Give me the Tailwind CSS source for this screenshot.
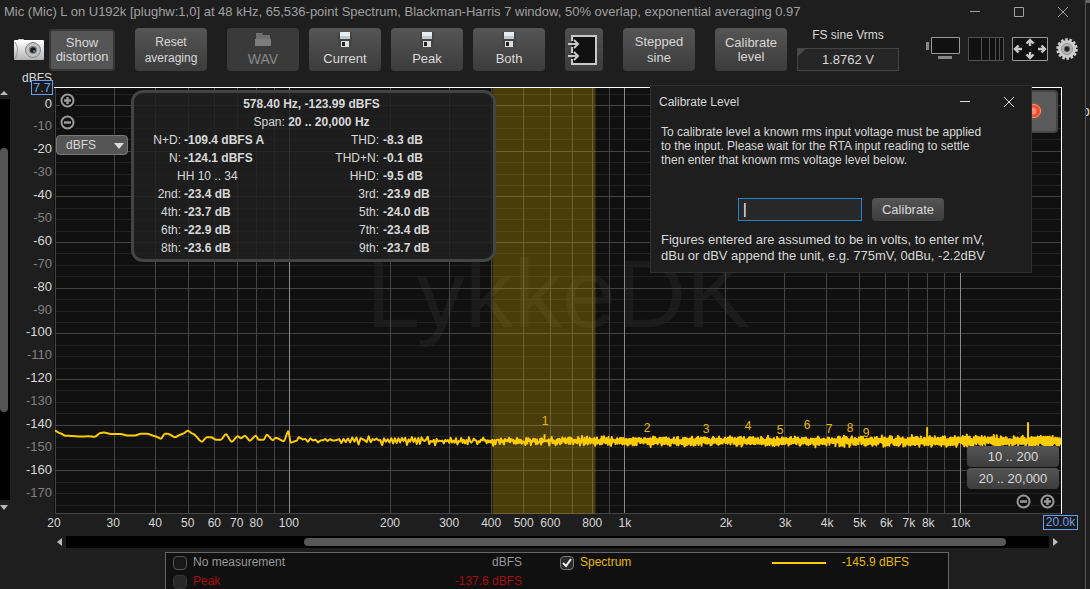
<!DOCTYPE html>
<html lang="en">
<head>
<meta charset="utf-8">
<title>RTA</title>
<script src="https://cdn.jsdelivr.net/npm/@tailwindcss/browser@4"></script>
</head>
<body class="flex h-screen overflow-hidden bg-[#1e1e1e] font-['Liberation_Sans',Arial,sans-serif] text-[13px] text-[#d8d8d8]">
<main class="relative flex min-w-0 flex-1 flex-col border-r border-[#555]">
  <header class="flex h-6 shrink-0 items-center justify-between pl-1">
    <h1 class="text-[13px] text-[#a0a0a0]">Mic (Mic) L on U192k [plughw:1,0] at 48 kHz, 65,536-point Spectrum, Blackman-Harris 7 window, 50% overlap, exponential averaging 0.97</h1>
    <div class="flex">
      <button aria-label="Minimise" class="flex h-6 w-11 items-center justify-center"><svg width="12" height="12" stroke="#a0a0a0" fill="none"><path d="M1 5.500h10"/></svg></button>
      <button aria-label="Maximise" class="flex h-6 w-11 items-center justify-center"><svg width="12" height="12" stroke="#a0a0a0" fill="none"><path d="M1.500 1.500h9v9h-9z"/></svg></button>
      <button aria-label="Close" class="flex h-6 w-11 items-center justify-center"><svg width="12" height="12" stroke="#a0a0a0" fill="none"><path d="M1 1l10 10M11 1L1 11"/></svg></button>
    </div>
  </header>

  <section class="flex h-[52px] shrink-0 items-start pt-1 pl-3.5 pr-[7px] leading-4" aria-label="Toolbar">
    <button aria-label="Capture image" class="mt-2.5 mr-[5px] h-6 w-[30px]">
      <svg width="30" height="24" viewBox="0 0 30 24"><defs><linearGradient id="cam" x2="0" y2="1"><stop stop-color="#fff"/><stop offset="1" stop-color="#b5b5b5"/></linearGradient></defs><rect x="4" y="1" width="6" height="4" rx="1" fill="#ccc"/><rect y="2" width="30" height="20" rx="1" fill="url(#cam)"/><path d="M1 4q5 7 0 17" stroke="#999" fill="none"/><circle cx="19" cy="12" r="7.500" fill="#bbb" stroke="#888"/><circle cx="19" cy="12" r="5" fill="#888" stroke="#ddd"/><circle cx="19" cy="12" r="2.800" fill="#181818"/><circle cx="20" cy="13" r="1" fill="#6b8db8"/><rect x="24" y="4" width="4" height="2" fill="#fff"/></svg>
    </button>
    <button class="mt-px h-[42px] w-[66px] rounded border-2 border-[#383838] bg-[#555] leading-[14px]">Show distortion</button>
    <button class="ml-5 h-[43px] w-[72px] rounded bg-linear-to-b from-[#555] to-[#3c3c3c] text-[12px]">Reset averaging</button>
    <button disabled class="ml-5 flex h-[43px] w-[72px] flex-col items-center rounded bg-[#3a3a3a] pt-1 text-[14px] text-[#888]"><svg width="18" height="15" fill="#707070"><path d="M2 1h6l1 2h7v5H2z"/><path d="M1 7h16v7H1z" fill="#7c7c7c"/></svg><span class="mt-1">WAV</span></button>
    <button class="ml-2.5 flex h-[43px] w-[72px] flex-col items-center rounded bg-linear-to-b from-[#555] to-[#3c3c3c] pt-1"><svg width="14" height="15"><use href="#disk"/></svg><span class="mt-1">Current</span></button>
    <button class="ml-2.5 flex h-[43px] w-[72px] flex-col items-center rounded bg-linear-to-b from-[#555] to-[#3c3c3c] pt-1"><svg width="14" height="15"><use href="#disk"/></svg><span class="mt-1">Peak</span></button>
    <button class="ml-2.5 flex h-[43px] w-[72px] flex-col items-center rounded bg-linear-to-b from-[#555] to-[#3c3c3c] pt-1"><svg width="14" height="15"><symbol id="disk" viewBox="0 0 14 15"><path d="M0 0h14v15H0z" fill="#444"/><path d="M2 0h10v7H2z" fill="#e7edf0"/><path d="M2 4h10v3H2z" fill="#c1ccd2"/><path d="M3 9h8v6H3z" fill="#ddd"/><path d="M4 10h3v4H4z" fill="#222"/></symbol><use href="#disk"/></svg><span class="mt-1">Both</span></button>
    <button aria-label="Import" class="ml-5 flex h-[43px] w-[38px] items-center justify-center rounded bg-linear-to-b from-[#505050] to-[#3c3c3c]"><svg width="32" height="32" fill="none" stroke="#c8c8c8" stroke-width="2"><path d="M4 2h24v28H4z" fill="#111" stroke="none"/><path d="M4 7V2h24v28H4v-5M4 13v6"/><path d="M0 10h10M6 6l4 4-4 4M0 22h10M6 18l4 4-4 4"/></svg></button>
    <button class="ml-5 h-[43px] w-[72px] rounded bg-linear-to-b from-[#555] to-[#3c3c3c]">Stepped<br>sine</button>
    <button class="ml-5 h-[43px] w-[72px] rounded bg-linear-to-b from-[#555] to-[#3c3c3c] leading-[14px]">Calibrate level</button>
    <div class="ml-2.5 flex w-[102px] flex-col items-center">
      <label for="vrms" class="h-5 text-[12px] leading-[14px]">FS sine Vrms</label>
      <input id="vrms" value="1.8762 V" class="h-[23px] w-full border border-[#444] bg-[#262626] bg-[linear-gradient(135deg,#484848_5px,transparent_5px)] text-center text-[13px]">
    </div>
    <div class="ml-auto flex items-start gap-2 pt-2">
      <button aria-label="Display" class="h-6 w-[34px]"><svg width="34" height="24"><path d="M0 6h3v8H0zM12 20h14v3H12z" fill="#888"/><path d="M5.500 1.500h28v16h-28z" fill="#111" stroke="#999"/></svg></button>
      <button aria-label="Frequency scale" class="h-[25px] w-9"><svg width="36" height="25" stroke="#505050" fill="#111"><path d="M.5 1.500h35v23H.5zM13.500 1v23M21.500 1v23M27.500 1v23M31.500 1v23"/></svg></button>
      <button aria-label="Fit to data" class="h-[25px] w-9"><svg width="36" height="25" fill="#111"><path d="M.5 1.500h35v23H.5z" stroke="#999"/><path d="M18 10V4M14.500 7.500L18 4l3.500 3.500M18 16v6M14.500 18.500L18 22l3.500-3.500M10 13H3M6.500 9.500L3 13l3.500 3.500M26 13h7M29.500 9.500L33 13l-3.500 3.500" stroke="#c8c8c8" stroke-width="2.400" fill="none"/></svg></button>
      <button aria-label="Settings" class="h-6 w-[22px]"><svg width="22" height="24" viewBox="0 0 22 24"><circle cx="11" cy="13" r="9.500" fill="none" stroke="#d0d0d0" stroke-width="2.500" stroke-dasharray="2.600 1.660"/><circle cx="11" cy="13" r="9" fill="#cdcdcd"/><circle cx="11" cy="13" r="5.500" fill="#b8b8b8" stroke="#909090"/><circle cx="11" cy="13" r="2.800" fill="#222" stroke="#666"/></svg></button>
    </div>
  </section>

  <section class="flex h-[438px] shrink-0" aria-label="Spectrum graph">
    <div class="flex w-2.5 flex-col pt-3.5">
      <svg class="shrink-0" width="10" height="9"><path d="M0 5l4-4 4 4z" fill="#bbb"/></svg>
      <div class="flex-1 bg-black pt-[49px]"><div class="h-[264px] w-2 rounded-full bg-[#555]"></div></div>
      <svg class="shrink-0" width="10" height="14"><path d="M0 5h8l-4 5z" fill="#bbb"/></svg>
    </div>
    <div class="relative w-11 shrink-0" id="yaxis">
      <span class="absolute right-0.5 -top-1.5 text-[12px] leading-4">dBFS</span>
      <span class="absolute right-px top-1 h-[15px] w-[22px] border border-[#6d9eeb] bg-[#1a1a1a] text-center leading-[13px] text-[#6d9eeb]">7.7</span>
    </div>
    <div class="relative mt-[11px] mr-[23px] min-w-0 flex-1 border-t border-r border-white bg-[#101010]" id="plot">
      <span class="absolute left-[31%] top-[157px] text-[97px] leading-none text-[#1b1b1b]">LykkeDK</span>
      <svg class="absolute inset-y-0 left-px h-full w-[calc(100%-1px)]" viewBox="0 0 1007 427" preserveAspectRatio="none" aria-hidden="true">
        <g id="grid" shape-rendering="crispEdges"></g>
        <rect x="438" width="103" height="427" fill="#fc0" fill-opacity=".24"/>
        <path id="trace" fill="none" stroke="#ffcc00" stroke-width="2" stroke-linejoin="round"/>
      </svg>
      <div id="marks" class="text-[12px] text-[#e6b800]"></div>

      <button aria-label="Zoom in level" class="absolute left-1.5 top-[5px] bg-[#101010]"><svg width="15" height="15" fill="none" stroke="#999" stroke-width="2"><circle cx="7.500" cy="7.500" r="6"/><path d="M7.500 4v7M4 7.500h7" stroke-width="2.500"/></svg></button>
      <button aria-label="Zoom out level" class="absolute left-1.5 top-[27px] bg-[#101010]"><svg width="15" height="15" fill="none" stroke="#999" stroke-width="2"><circle cx="7.500" cy="7.500" r="6"/><path d="M4 7.500h7" stroke-width="2.500"/></svg></button>
      <div class="absolute left-0.5 top-[47px] flex h-5 w-[72px] items-center">
        <select aria-label="Level unit" class="h-5 w-full appearance-none rounded-sm border border-[#777] bg-[#555] pl-[9px] text-[12px] leading-4"><option>dBFS</option></select>
        <svg class="pointer-events-none absolute right-1 top-2" width="10" height="6"><path d="M0 0h10L5 6z" fill="#ddd"/></svg>
      </div>

      <div class="absolute left-[77px] top-0.5 h-[172px] w-[365px] rounded-xl border-3 border-[#444] bg-[#202020]/85 pt-0.5 text-[12px] leading-[18px]">
        <p class="pr-1 text-center font-bold">578.40 Hz, -123.99 dBFS</p>
        <p class="pr-1 text-center">Span: <b>20 .. 20,000 Hz</b></p>
        <table class="w-full table-fixed border-collapse">
          <colgroup><col class="w-[47px]"><col class="w-[148px]"><col class="w-[50px]"><col></colgroup>
          <tbody id="readings"></tbody>
        </table>
      </div>

      <button aria-label="Record" class="absolute right-[3px] top-0.5 flex h-[43px] w-[48px] items-center justify-center rounded border-2 border-[#444] bg-[#5a5a5a]"><svg width="24" height="24"><circle cx="12" cy="11" r="9" fill="#75594c"/><circle cx="12" cy="11" r="6.500" fill="#f24a2a" stroke="#e8a080"/><circle cx="11" cy="11" r="3.500" fill="#ff8b78"/></svg></button>

      <div class="absolute right-0.5 bottom-[5px] flex w-[92px] flex-col gap-px">
        <button class="h-[21px] rounded bg-linear-to-b from-[#555] to-[#3c3c3c] leading-5">10 .. 200</button>
        <button class="h-[21px] rounded bg-linear-to-b from-[#555] to-[#3c3c3c] leading-5">20 .. 20,000</button>
        <div class="flex justify-end gap-[9px] pt-1 pr-1">
          <button aria-label="Zoom out frequency" class="bg-[#101010]"><svg width="15" height="15" fill="none" stroke="#999" stroke-width="2"><circle cx="7.500" cy="7.500" r="6"/><path d="M4 7.500h7" stroke-width="2.500"/></svg></button>
          <button aria-label="Zoom in frequency" class="bg-[#101010]"><svg width="15" height="15" fill="none" stroke="#999" stroke-width="2"><circle cx="7.500" cy="7.500" r="6"/><path d="M7.500 4v7M4 7.500h7" stroke-width="2.500"/></svg></button>
        </div>
      </div>
    </div>
  </section>

  <div class="relative mr-[23px] ml-[54px] h-[22px] shrink-0 text-[12px]" id="xaxis">
    <span class="absolute -right-4 top-px h-[15px] w-[35px] border border-[#6d9eeb] bg-[#1a1a1a] text-center leading-[13px] text-[#6d9eeb]">20.0k</span>
  </div>

  <div class="mr-[23px] ml-[54px] flex h-3 shrink-0 items-center">
    <svg class="shrink-0" width="12" height="12"><path d="M8 2v8L3 6z" fill="#bbb"/></svg>
    <div class="flex h-3 flex-1 items-center bg-black pr-[43px] pl-[238px]"><div class="h-2 w-full rounded-full bg-[#585858]"></div></div>
    <svg class="shrink-0" width="13" height="12"><path d="M4 2v8l5-4z" fill="#bbb"/></svg>
  </div>

  <section class="mt-1 mr-[136px] ml-[165px] grid min-h-0 flex-1 grid-cols-[357px_1fr] content-start gap-x-[30px] border border-b-0 border-[#666] bg-[#101010] pr-[39px] pl-[7px] text-[12px] leading-[19px]" aria-label="Legend">
    <div class="flex items-center justify-between text-[#999]"><label class="flex items-center gap-1.5"><input type="checkbox" class="size-3.5 appearance-none rounded-sm border border-[#555] bg-[#181818]">No measurement</label><span class="pr-2">dBFS</span></div>
    <div class="flex items-center text-[#e6b800]"><label class="flex items-center gap-1.5"><input type="checkbox" checked class="size-3.5 appearance-none rounded-sm border border-[#777] bg-[#2a2a2a] bg-[url('data:image/svg+xml,%3Csvg%20xmlns=%22http://www.w3.org/2000/svg%22%20viewBox=%220%200%2012%2012%22%3E%3Cpath%20d=%22M2%206l3%203%205-7%22%20fill=%22none%22%20stroke=%22%23eee%22%20stroke-width=%222%22/%3E%3C/svg%3E')]">Spectrum</label><span class="mr-4 ml-auto h-0.5 w-[54px] bg-[#fc0]"></span><span>-145.9 dBFS</span></div>
    <div class="flex items-center justify-between text-[#a80c0c]"><label class="flex items-center gap-1.5"><input type="checkbox" disabled class="size-3.5 appearance-none rounded-sm border border-[#333] bg-[#282828]">Peak</label><span class="pr-2">-137.6 dBFS</span></div>
  </section>

  <div role="dialog" aria-labelledby="dlg" class="absolute left-[650px] top-[85px] w-[382px] border border-[#303030] bg-[#1e1e1e] px-2.5 pb-2">
    <div class="-mx-0.5 flex h-[31px] items-center justify-between">
      <h2 id="dlg" class="text-[12px]">Calibrate Level</h2>
      <div class="flex gap-8 pr-2"><button aria-label="Minimise dialog"><svg width="12" height="12" stroke="#ddd"><path d="M1 5.500h10"/></svg></button><button aria-label="Close dialog"><svg width="12" height="12" stroke="#ddd"><path d="M1 1l10 10M11 1L1 11"/></svg></button></div>
    </div>
    <p class="pt-2 text-[12px] leading-[14px]">To calibrate level a known rms input voltage must be applied<br>to the input. Please wait for the RTA input reading to settle<br>then enter that known rms voltage level below.</p>
    <div class="mt-[31px] ml-[77px] flex gap-2.5">
      <input id="level" aria-label="Input level" value="|" class="h-[23px] w-[124px] border border-[#1b86c8] bg-[#282828] px-1 pb-0.5 text-[14px] text-white outline-none">
      <button class="h-[23px] w-[72px] rounded bg-linear-to-b from-[#555] to-[#3c3c3c]">Calibrate</button>
    </div>
    <p class="pt-[11px] text-[13px] leading-4">Figures entered are assumed to be in volts, to enter mV,<br>dBu or dBV append the unit, e.g. 775mV, 0dBu, -2.2dBV</p>
  </div>
</main>
<aside class="w-1 shrink-0 overflow-hidden"><div class="h-[3px] bg-[#666]"></div><div class="-ml-1 pt-[99px] text-[14px] leading-[18px]">b</div></aside>

<script>
const W = 1007, H = 427, DEC = W / 3, DB = 2.288;
const fx = f => Math.log10(f / 20) * DEC;
const dy = d => (7.7 - d) * DB;
let g = '';
for (let d = 5; d > -178; d -= 5) {
  g += `<path d="M0 ${dy(d)}H${W}" stroke="${d % 20 === 0 ? '#424242' : '#212121'}"/>`;
}
for (const m of [10, 100, 1000, 10000]) for (let k = 1; k < 10; k++) {
  const f = m * k;
  if (f < 20 || f >= 20000) continue;
  g += `<path d="M${fx(f)} 0V${H}" stroke="${k === 1 ? '#8a8a8a' : '#444'}"/>`;
}
g += `<path d="M0 426.500H${W}" stroke="#444"/>`;
document.getElementById('grid').innerHTML = g;

const low = [55,431,60,433.5,65,436,72,436.300,80,436.800,88,436.600,95,437,100,433.5,104,432.800,111,434.300,121,434.300,127,435.800,135,435.800,141,434,147,434,155,436.5,161,439,165,434,168,434,175,437.5,183,434,188,431,193,434,202,442,207,437.5,211,437.5,216,440,221,440,226,434.5,232,442,238,436.5,241,438.5,245,436,250,441,256,436,259,440,264,440,267,435,273,440.5,276,438,284,441.5,288.5,431.5,291,443,297,441,299,437.5];
// Horizontal-tangent curves keep every low-frequency peak at full height
let p = `M0 ${low[1] - 87.5}`;
for (let i = 2; i < low.length; i += 2) {
  const x0 = low[i - 2] - 55, y0 = low[i - 1] - 87.5, x = low[i] - 55, y = low[i + 1] - 87.5, h = (x - x0) * 0.3;
  p += `C${x0 + h} ${y0} ${x - h} ${y} ${x} ${y}`;
}
let seed = 7;
const rnd = () => (seed = (seed * 16807) % 2147483647) / 2147483647;
let up = 1;
for (let x = 248; x < W;) {
  const t = (x - 248) / (W - 248);
  const amp = 1 + 3.6 * Math.sqrt(t);
  const noise = (rnd() + rnd() + rnd() - 1.5) * 2.2;
  p += 'L' + x.toFixed(1) + ' ' + (352.5 + 1.5 * Math.min(1, t * 4) + up * amp * (0.3 + 0.7 * rnd()) + noise).toFixed(1);
  up = -up;
  x += Math.max(0.5, 2.6 * Math.pow(1 - t, 3));
}
document.getElementById('trace').setAttribute('d', p + 'M490 353V347M873 353V340M974 353V335');

document.getElementById('marks').innerHTML = [[545,421],[647,428],[706,429],[748,426],[780,430],[807,425],[829,429],[850,428],[866,433]]
  .map(([x, y], i) => `<span class="absolute -translate-x-1/2 -translate-y-1/2 leading-3" style="left:${(x - 54) / W * 100}%;top:${y - 88}px">${i + 1}</span>`).join('');

let ys = '';
for (let d = 0; d >= -170; d -= 10) ys += `<span class="absolute right-0.5 -translate-y-1/2 leading-4 ${d % 20 ? 'text-[#808080]' : ''}" style="top:${Math.round(dy(d)) + 10}px">${d}</span>`;
document.getElementById('yaxis').insertAdjacentHTML('beforeend', ys);

const fs = [20,30,40,50,60,70,80,100,200,300,400,500,600,800,1000,2000,3000,4000,5000,6000,7000,8000,10000];
document.getElementById('xaxis').insertAdjacentHTML('beforeend', fs.map(f => `<span class="absolute top-px -translate-x-1/2 leading-4" style="left:${fx(f) / W * 100}%">${f < 1000 ? f : f / 1000 + 'k'}</span>`).join(''));

const rows = [['N+D:','-109.4 dBFS A','THD:','-8.3 dB'],['N:','-124.1 dBFS','THD+N:','-0.1 dB'],['HH','10 .. 34','HHD:','-9.5 dB'],['2nd:','-23.4 dB','3rd:','-23.9 dB'],['4th:','-23.7 dB','5th:','-24.0 dB'],['6th:','-22.9 dB','7th:','-23.4 dB'],['8th:','-23.6 dB','9th:','-23.7 dB']];
document.getElementById('readings').innerHTML = rows.map(r => r[0] === 'HH'
  ? `<tr><td colspan="2" class="p-0 pl-[43px]">HH 10 .. 34</td><td class="p-0"><div class="flex justify-end whitespace-nowrap">${r[2]}</div></td><td class="p-0 pl-1 font-bold">${r[3]}</td></tr>`
  : `<tr><td class="p-0 text-right">${r[0]}</td><td class="p-0 pl-[3px] font-bold">${r[1]}</td><td class="p-0"><div class="flex justify-end whitespace-nowrap">${r[2]}</div></td><td class="p-0 pl-1 font-bold">${r[3]}</td></tr>`).join('');
</script>
</body>
</html>
